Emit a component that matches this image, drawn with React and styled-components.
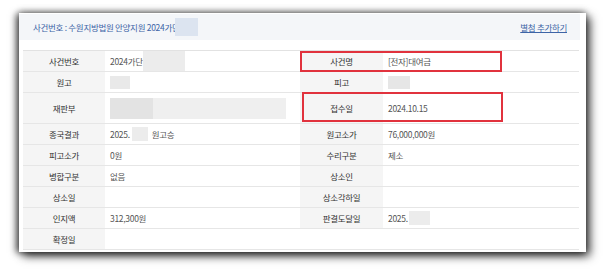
import React from 'react';
import styled, { createGlobalStyle } from 'styled-components';

const GlobalStyle = createGlobalStyle`
  html, body {
    margin: 0;
    padding: 0;
    background: #ffffff;
  }
  body {
    font-family: "Noto Sans CJK KR", "Noto Sans", "Liberation Sans", sans-serif;
  }
`;

const Page = styled.div`
  width: 606px;
  height: 270px;
  padding: 13px 0 0 19px;
  box-sizing: border-box;
  overflow: hidden;
`;

const Card = styled.div`
  width: 567px;
  height: 239px;
  background: #fff;
  box-shadow: 4px 4px 9px rgba(0, 0, 0, 0.75), -3px 1px 7px rgba(0, 0, 0, 0.6), 0 -2px 6px rgba(0, 0, 0, 0.25);
  padding: 1px 6px 0 0;
  box-sizing: border-box;
  display: flex;
  flex-direction: column;
`;

const Header = styled.div`
  height: 26px;
  background: #f4f6f9;
  display: flex;
  align-items: center;
  justify-content: space-between;
  padding: 0 13px 0 14px;
  font-size: 8.5px;
  letter-spacing: -0.3px;
  color: #3d64a6;
`;

const Title = styled.div`
  display: flex;
  align-items: center;
`;

const Link = styled.a`
  color: #3d64a6;
  text-decoration: underline;
  cursor: pointer;
`;

const TableWrap = styled.div`
  position: relative;
  margin: 10px 1px 0 4px;
`;

const Table = styled.div`
  display: grid;
  grid-template-columns: 82px 195px 83px 196px;
  border-top: 1px solid #e2e2e2;
`;

const Label = styled.div`
  height: ${p => p.$h || 21}px;
  box-sizing: border-box;
  background: #f5f5f5;
  border-bottom: 1px solid #e6e6e6;
  display: flex;
  align-items: center;
  justify-content: center;
  font-size: 8.5px;
  font-weight: 400;
  letter-spacing: -0.3px;
  color: #333;
`;

const Value = styled.div`
  height: ${p => p.$h || 21}px;
  box-sizing: border-box;
  border-bottom: 1px solid #e6e6e6;
  display: flex;
  align-items: center;
  padding-left: 5px;
  font-size: 8.5px;
  letter-spacing: -0.3px;
  color: #555;
`;

const Blank = styled.div`
  height: ${p => p.$h || 21}px;
  box-sizing: border-box;
  border-bottom: 1px solid #e6e6e6;
  background: #fff;
`;

const Redact = styled.span`
  display: inline-block;
  width: ${p => p.$w}px;
  height: ${p => p.$h}px;
  margin-left: ${p => p.$ml || 0}px;
  margin-right: ${p => p.$mr || 0}px;
  background: ${p => p.$c || '#ececec'};
  filter: blur(0.4px);
`;

const Mark = styled.div`
  position: absolute;
  left: ${p => p.$x}px;
  top: ${p => p.$y}px;
  width: ${p => p.$w}px;
  height: ${p => p.$h}px;
  border: 2px solid #e1323d;
  box-sizing: border-box;
  pointer-events: none;
`;

const rows = [
  {
    l1: '사건번호',
    v1: (<>2024가단<Redact $w={42} $h={20} /></>),
    l2: '사건명',
    v2: '[전자]대여금',
  },
  {
    l1: '원고',
    v1: <Redact $w={20} $h={13} $c="#e9e9e9" />,
    l2: '피고',
    v2: <Redact $w={22} $h={13} $c="#e6e6e6" />,
  },
  {
    l1: '재판부',
    h: 31,
    v1: (<><Redact $w={43} $h={21} $c="#e3e3e3" /><Redact $w={133} $h={21} $c="#efefef" /></>),
    l2: '접수일',
    v2: '2024.10.15',
  },
  {
    l1: '종국결과',
    v1: (<>2025.<Redact $w={16} $h={14} $ml={2} $mr={4} />원고승</>),
    l2: '원고소가',
    v2: '76,000,000원',
  },
  { l1: '피고소가', v1: '0원', l2: '수리구분', v2: '제소' },
  { l1: '병합구분', v1: '없음', l2: '상소인', v2: '' },
  { l1: '상소일', v1: '', l2: '상소각하일', v2: '' },
  {
    l1: '인지액',
    v1: '312,300원',
    l2: '판결도달일',
    v2: (<>2025.<Redact $w={21} $h={14} $ml={1} /></>),
  },
  { l1: '확정일', v1: '' },
];

export default function App() {
  return (
    <>
      <GlobalStyle />
      <Page>
        <Card>
          <Header>
            <Title>
              사건번호 : 수원지방법원 안양지원 2024가단
              <Redact $w={23} $h={18} $c="#dce4f0" $ml={-4} />
            </Title>
            <Link>별첨 추가하기</Link>
          </Header>
          <TableWrap>
            <Table>
              {rows.map(r => (
                <React.Fragment key={r.l1}>
                  <Label $h={r.h}>{r.l1}</Label>
                  <Value $h={r.h}>{r.v1}</Value>
                  {r.l2 ? (
                    <>
                      <Label $h={r.h}>{r.l2}</Label>
                      <Value $h={r.h}>{r.v2}</Value>
                    </>
                  ) : (
                    <>
                      <Blank $h={r.h} />
                      <Blank $h={r.h} />
                    </>
                  )}
                </React.Fragment>
              ))}
            </Table>
            <Mark $x={277} $y={1} $w={202} $h={21} />
            <Mark $x={279} $y={42} $w={201} $h={30} />
          </TableWrap>
        </Card>
      </Page>
    </>
  );
}
